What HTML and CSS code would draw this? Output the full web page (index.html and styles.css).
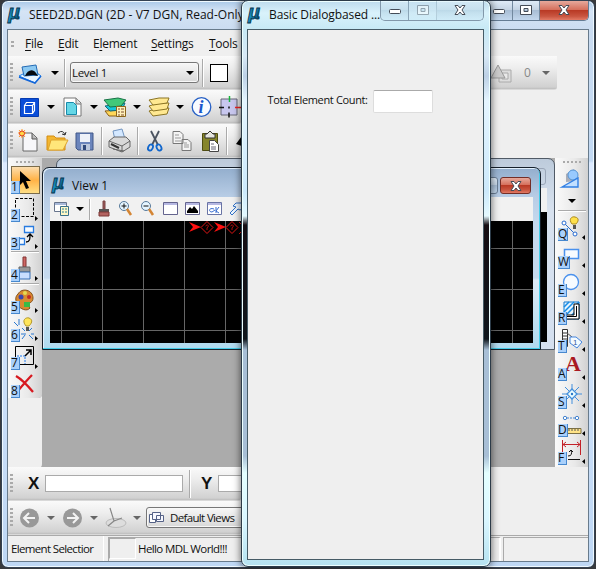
FILE: index.html
```html
<!DOCTYPE html>
<html lang="en">
<head>
<meta charset="utf-8">
<title>SEED2D.DGN</title>
<link rel="stylesheet" href="styles.css">
</head>
<body>
<div class="desktop">
<section class="window main">
  <header class="titlebar">
    <svg class="logo" width="16" height="18"><defs><linearGradient id="mu" x1="0" y1="0" x2="1" y2="1"><stop offset="0" stop-color="#06304a"/><stop offset=".5" stop-color="#168fc0"/><stop offset="1" stop-color="#04263c"/></linearGradient></defs><text class="mu" x="0" y="12" fill="url(#mu)">µ</text></svg>
    <span class="title">SEED2D.DGN (2D - V7 DGN, Read-Only</span>
    <div class="controls">
      <i class="ctl"><svg width="14" height="12"><rect x="1.500" y="5.500" width="11" height="4" rx="1"/></svg></i>
      <i class="ctl"><svg width="14" height="12"><path fill-rule="evenodd" d="M1.500 1.500h11v9h-11zM5 4.500h4v3H5z"/></svg></i>
      <i class="ctl close"><svg width="14" height="12"><path d="M2 1.500h3l2 2.500 2-2.500h3L9 6l3 4.500H9L7 8l-2 2.500H2L5 6z"/></svg></i>
    </div>
  </header>
  <div class="client">
    <nav class="menu"><i class="grip short"></i><span class="m1"><u>F</u>ile</span><span class="m2"><u>E</u>dit</span><span class="m3">E<u>l</u>ement</span><span class="m4"><u>S</u>ettings</span><span class="m5"><u>T</u>ools</span></nav>
    <div class="bar attributes">
      <i class="grip"></i>
      <svg class="ic" viewBox="0 0 27 28"><path d="M3 17l16 7 6-7-4-3H9z" fill="#e9f5ff" stroke="#1680ee"/><path d="M3 18l16 6 6-7" fill="none" stroke="#1466d8" stroke-width="1.500"/><path d="M6 8l14-2 2 10-14 1z" fill="#8cc9f2" stroke="#246bb5"/><path d="M9 17c2-6 8-8 11-3l2 3-5-1z" fill="#05090f"/></svg>
      <i class="drop wide"></i><i class="sep"></i>
      <div class="combo level"><span>Level 1</span><i class="drop"></i></div>
      <i class="sep"></i><i class="swatch"></i><i class="fill"></i>
      <svg class="ic" viewBox="0 0 27 28"><path d="M12 11h12v12H12z" fill="#ddd" stroke="#aaa"/><path d="M15 14h6v6h-6z" fill="#e9e9e9" stroke="#aaa"/><path d="M4 19L11 6l7 13z" fill="#ccc" stroke="#999"/></svg>
      <span class="zero">0</span><i class="drop dim"></i>
    </div>
    <div class="bar primary">
      <i class="grip"></i>
      <svg class="ic" viewBox="0 0 27 28"><path d="M4.500 5.500h18v18h-18z" fill="#0b4ed8" stroke="#063bb0"/><path d="M8.500 12.500h8v8h-8zm0 0l2-3h8v8l-2 3m0-8l2-3" fill="none" stroke="#fff" stroke-width="1.200"/></svg><i class="drop"></i>
      <svg class="ic" viewBox="0 0 27 28"><path d="M5 5h12l5 5v13H5z" fill="#fff" stroke="#777"/><path d="M17 5v6h5" fill="#ddd" stroke="#777"/><path d="M7.500 9.500h7l3 3v9h-10z" fill="#65d7e6" stroke="#188aab"/></svg><i class="drop"></i>
      <svg class="ic" viewBox="0 0 27 28"><path d="M3 18l4 5h9l3-6z" fill="#ffd75a" stroke="#875c16"/><path d="M3 13l5 5 12-1 3-7z" fill="#16c6d8" stroke="#146677"/><path d="M2 7l14-2 8 2-5 6-11 1z" fill="#42c879" stroke="#187346"/><path d="M14.500 13.500h9v10h-9z" fill="#fff0ba" stroke="#8b651a"/><path d="M16 16h2m1 0h3m-6 3h2m1 0h3m-6 3h2m1 0h3" stroke="#7c4d2a"/></svg><i class="drop"></i>
      <svg class="ic" viewBox="0 0 27 28"><g fill="#ffe891" stroke="#8b7424"><path d="M4 18l4 5 14-2 2-6H14z"/><path d="M4 13l4 5 14-2 2-6H14z"/><path d="M4 7l4 5 14-2 2-5H14z"/></g></svg><i class="drop"></i>
      <svg class="ic" viewBox="0 0 27 28"><circle cx="13.500" cy="14" r="9.300" fill="#f8fbff" stroke="#2861c5" stroke-width="1.300"/><text x="10.500" y="20" class="info">i</text></svg>
      <svg class="ic" viewBox="0 0 27 28"><path d="M6 6h16v16H6z" fill="#c8c7ee" stroke="#667"/><path d="M14.500 3v6" stroke="#18b53c" stroke-width="1.500"/><path d="M4 14.500h5m5-1v2m0 4v5" stroke="#111" stroke-width="1.500"/><path d="M20 14.500h7" stroke="#e22" stroke-width="1.500"/></svg>
    </div>
    <div class="bar standard">
      <i class="grip"></i>
      <svg class="ic" viewBox="0 0 27 28"><path d="M7 6h9l5 5v13H7z" fill="#f7f7fa" stroke="#666"/><path d="M16 6v6h5" fill="#bbb" stroke="#555"/><path d="M6 2v9M2 6h8M3 3l6 7M9 3l-6 7" stroke="#ff9b28"/><circle cx="6" cy="6.500" r="2.500" fill="#ffda48" stroke="#e13820"/></svg>
      <svg class="ic" viewBox="0 0 27 28"><path d="M4 9h7l2 2h9v12H4z" fill="#f3b631" stroke="#d48c11"/><path d="M8 13h17l-5 10H5z" fill="#ffe67a" stroke="#dea32c"/><path d="M15 6q5-4 7 2m0 0l-3-1m3 1l1-3" fill="none" stroke="#333"/></svg>
      <svg class="ic" viewBox="0 0 27 28"><path d="M6 6h17v17H8l-2-2z" fill="#6b85bc" stroke="#405787"/><path d="M10 7h10v8H10z" fill="#eef1f8"/><path d="M11 17h9v6h-9z" fill="#bcc8dd"/><path d="M13 18h3v5h-3z" fill="#31497b"/></svg>
      <i class="sep printsep"></i>
      <svg class="ic" viewBox="0 0 27 28"><path d="M7 4l9-2 3 10-10 1z" fill="#d4e8ff" stroke="#7295c0"/><path d="M3 14l5-4h12l4 4v6l-8 5-13-5z" fill="#d9d9d9" stroke="#666"/><path d="M3 14l13 5 8-5M16 19v6m-9-3l11 2" fill="none" stroke="#666"/><path d="M5 17l8 4" stroke="#333" stroke-width="2"/></svg>
      <i class="sep printsep"></i>
      <svg class="ic" viewBox="0 0 27 28"><path d="M9 4l7 14M17 4l-7 14" stroke="#4a5360" stroke-width="1.800"/><ellipse cx="8.500" cy="20.500" rx="2.300" ry="3.200" transform="rotate(25 8.500 20.500)" fill="none" stroke="#1267cc" stroke-width="1.800"/><ellipse cx="17" cy="20.500" rx="2.300" ry="3.200" transform="rotate(-25 17 20.500)" fill="none" stroke="#1267cc" stroke-width="1.800"/></svg>
      <svg class="ic" viewBox="0 0 27 28"><path d="M4 4.500h7l3 3v9H4zm9 8h6l3 3v8h-9z" fill="#f4f4f4" stroke="#777"/><path d="M6 8h4m-4 3h6m-6 3h6m3 2h3m-3 2h5m-5 2h5" stroke="#999"/></svg>
      <svg class="ic" viewBox="0 0 27 28"><path d="M6.500 6.500h15v17h-15z" fill="#86852b" stroke="#4f4d12"/><path d="M9 7h2l3-3 3 3h2v4H9z" fill="#e6e6df" stroke="#333"/><path d="M13.500 13.500h5l4 4v7h-9z" fill="#fff" stroke="#444"/><path d="M15 17h3m-3 3h5m-5 2h5" stroke="#667"/></svg>
      <i class="sep tail"></i>
      <svg class="ic" viewBox="0 0 27 28"><path d="M8 17l6-8v10z"/></svg>
    </div>
    <div class="workspace">
      <aside class="rail left">
        <i class="grip horizontal"></i>
        <div class="tool active"><svg viewBox="0 0 28 28"><path d="M9 5v14l3-3 3 7 3-1-3-7h5z"/></svg><b>1</b></div>
        <div class="tool"><svg viewBox="0 0 28 28"><path d="M4.500 4.500h18v18h-18z" fill="none" stroke="#000" stroke-dasharray="3 1.500"/><path d="M24 22v5l3-2.500z"/></svg><b>2</b></div>
        <div class="tool"><svg viewBox="0 0 28 28"><path d="M13.500 4.500h9v6h-9zM5.500 16.500h8v6h-8z" fill="#f7fbff" stroke="#287be0" stroke-width="1.300"/><path d="M15 20c4 0 4-3 4-8m-3 3l3-3 3 3" fill="none" stroke="#000" stroke-width="1.300"/><path d="M24 22v5l3-2.500z"/></svg><b>3</b></div>
        <i class="rule"></i>
        <div class="tool"><svg viewBox="0 0 28 28"><path d="M12 3h3v10h-3z" fill="#ce6663" stroke="#813332"/><path d="M8 13h11v5H8z" fill="#999" stroke="#666"/><path d="M8 18h11v7H8z" fill="#c9deff" stroke="#366fb4"/><path d="M24 22v5l3-2.500z"/></svg><b>4</b></div>
        <i class="rule"></i>
        <div class="tool"><svg viewBox="0 0 28 28"><path d="M7 8c4-7 15-4 15 4 0 5-4 4-5 7l2 3c-3 4-10 1-12-3-3-5-3-8 0-11z" fill="#d88a31" stroke="#85511c"/><circle cx="10" cy="11" r="2.500" fill="#3d45ad"/><circle cx="14" cy="7" r="2" fill="#e5da52"/><circle cx="18" cy="11" r="2" fill="#c52b24"/><path d="M13 16h6v5h-6z" fill="#38bc48"/><path d="M24 22v5l3-2.500z"/></svg><b>5</b></div>
        <div class="tool"><svg viewBox="0 0 28 28"><path d="M3 8l4 4m1-7v6M10 20h5m5 0h3M11 14l3 3m7-3l-3 3m-4 4l-3 4m7-4l4 4" fill="none" stroke="#2b78d0"/><path d="M15 12c-5-6 0-9 3-8 5 2 2 6 0 8z" fill="#ffe55a" stroke="#b49829"/><path d="M15 13h3v4h-3z" fill="#555"/><path d="M24 22v5l3-2.500z"/></svg><b>6</b></div>
        <div class="tool"><svg viewBox="0 0 28 28"><path d="M4.500 4.500h18v18h-18z" fill="none" stroke="#000"/><path d="M6 14h8v8" fill="none" stroke="#1f7bf0" stroke-dasharray="2 1"/><path d="M14 14l6-6m-5 0h5v5" fill="none" stroke="#000" stroke-width="1.500"/><path d="M24 22v5l3-2.500z"/></svg><b>7</b></div>
        <div class="tool"><svg viewBox="0 0 28 28"><path d="M5 6c7 4 12 10 17 16M21 5C16 10 11 16 6 22" fill="none" stroke="#d71920" stroke-width="2.300"/></svg><b>8</b></div>
      </aside>
      <div class="canvas">
        <div class="view back"><i class="backbutton"></i><div class="backbody"></div></div>
        <div class="view front">
          <header class="viewtitle"><svg class="logo" width="18" height="18"><text class="mu" x="1" y="12" fill="url(#mu)">µ</text></svg><span>View 1</span><i class="ctl"></i><i class="ctl close"><svg width="14" height="12"><path d="M2 1.500h3l2 2.500 2-2.500h3L9 6l3 4.500H9L7 8l-2 2.500H2L5 6z"/></svg></i></header>
          <div class="viewtools">
            <svg class="va" viewBox="0 0 22 22"><path d="M4.500 4.500h12v9h-12z" fill="#fff" stroke="#68758d"/><path d="M5 5h11v2H5z" fill="#a8b9d9"/><path d="M10.500 8.500h8v9h-8z" fill="#fff7c5" stroke="#38708a"/><path d="M12 11h2m1 0h2m-5 3h2m1 0h2" stroke="#27819a"/></svg><i class="drop"></i><i class="sep"></i>
            <svg viewBox="0 0 22 22"><path d="M10 3h2v8h-2z" fill="#9e5959" stroke="#794444"/><path d="M6 11h10v3H6z" fill="#555"/><path d="M6 14h10v4H6z" fill="#b26360" stroke="#7c3837"/></svg>
            <svg viewBox="0 0 22 22"><circle cx="9" cy="8" r="4.500" fill="#e5f5ff" stroke="#56799a"/><path d="M12 11l4 6" stroke="#d48534" stroke-width="2.500"/><path d="M6.500 8h5M9 5.500v5" stroke="#111"/></svg>
            <svg viewBox="0 0 22 22"><circle cx="9" cy="8" r="4.500" fill="#e5f5ff" stroke="#56799a"/><path d="M12 11l4 6" stroke="#d48534" stroke-width="2.500"/><path d="M6.500 8h5" stroke="#111"/></svg>
            <svg viewBox="0 0 22 22"><path d="M4.500 4.500h14v12h-14z" fill="#fff" stroke="#64648e"/><path d="M5 5h13v2H5z" fill="#b6b8e2"/></svg>
            <svg viewBox="0 0 22 22"><path d="M4.500 4.500h14v12h-14z" fill="#fff" stroke="#64648e"/><path d="M5 5h13v2H5z" fill="#b6b8e2"/><path d="M6 15v-2l3-4 2 2 2-3 4 5v2z"/></svg>
            <svg viewBox="0 0 22 22"><path d="M4.500 4.500h14v12h-14z" fill="#fff" stroke="#6974a5"/><path d="M5 5h13v2H5z" fill="#b6b8e2"/><path d="M11 11c-5-2-6 3-2 3l3-2m1-3v6m0-2l3-4m-3 4l3 2" stroke="#376cd0" fill="none"/></svg>
            <svg viewBox="0 0 22 22"><path d="M5 15l6-6-3-1 3-3h6v6l-2 1-2-1-6 6z" fill="#edf6ff" stroke="#3271c6"/></svg>
          </div>
          <svg class="drawing" viewBox="0 0 483 122"><path d="M11.500 0v122m41-122v122m41-122v122m41-122v122m41-122v122m41-122v122m41-122v122m41-122v122m41-122v122m41-122v122m41-122v122m41-122v122M0 27.500h483M0 68.500h483M0 109.500h483" stroke="#666" fill="none"/><path d="M139 1l12 5-12 5 4-5zM164 1l12 5-12 5 4-5z" fill="#f11"/><path d="M151 6.500l6-6 6 6-6 6zM176 6.500l6-6 6 6-6 6zM189 1l6 6-6 6" stroke="#e31616" fill="none"/><path d="M155.500 5q2-2.500 3 0l-1.500 2v2m23.500-4q2-2.500 3 0l-1.500 2v2" stroke="#d11" stroke-width=".8" fill="none"/></svg>
        </div>
      </div>
      <aside class="rail right">
        <i class="grip horizontal"></i>
        <svg class="place" viewBox="0 0 28 26"><path d="M8 8l8-5 4 12-12 1z" fill="#a9adb8"/><circle cx="15" cy="9" r="5" fill="#98caff" stroke="#5795d4"/><path d="M4 21l16-9v9z" fill="#c3e0ff" stroke="#3280e5" stroke-width="1.400"/></svg>
        <i class="drop"></i><i class="rule"></i>
        <div class="tool"><svg viewBox="0 0 28 28"><path d="M6 10l10 10" stroke="#286bd0"/><circle cx="6" cy="10" r="2" fill="#fff" stroke="#286bd0"/><circle cx="17" cy="21" r="2" fill="#fff" stroke="#286bd0"/><path d="M14 11c-4-5 0-8 3-7 5 1 3 5 1 7z" fill="#ffe14b" stroke="#aa8920"/><path d="M15 12h3v4h-3z" fill="#555"/><path d="M27 22v5l-3-2.500z"/></svg><b>Q</b></div>
        <div class="tool"><svg viewBox="0 0 28 28"><path d="M6.500 8.500h14v9h-14z" fill="#f7fbff" stroke="#4a91ed" stroke-width="1.500"/><path d="M27 22v5l-3-2.500z"/></svg><b>W</b></div>
        <div class="tool"><svg viewBox="0 0 28 28"><circle cx="13" cy="13" r="7.500" fill="#f7fbff" stroke="#4a91ed" stroke-width="1.300"/><path d="M27 22v5l-3-2.500z"/></svg><b>E</b></div>
        <div class="tool"><svg viewBox="0 0 28 28"><path d="M6 5h15v17H6z" fill="#e4f4ff" stroke="#1379cd"/><path d="M6 10l5-5m-5 10L16 5M6 20L21 5M10 22l11-11" stroke="#168ce6" stroke-width="1.500"/><path d="M16 7h5v15H8v-4h8z" fill="#fff" stroke="#000"/><path d="M18.500 9v10.500H9" fill="none" stroke="#000"/><path d="M27 22v5l-3-2.500z"/></svg><b>R</b></div>
        <div class="tool"><svg viewBox="0 0 28 28"><path d="M4.500 4.500h5v17h-5zM5 8h5m-5 3h5m-5 3h5m-5 3h5" fill="#fff" stroke="#333"/><path d="M9 8l5 4" stroke="#555"/><path d="M12 12h6l6 5-5 6-7-5z" fill="#f4fbff" stroke="#4485df"/><text x="15" y="20" class="tag">1</text><path d="M27 22v5l-3-2.500z"/></svg><b>T</b></div>
        <div class="tool"><svg viewBox="0 0 28 28"><text x="7" y="18" class="red-a">A</text><path d="M27 22v5l-3-2.500z"/></svg><b>A</b></div>
        <div class="tool"><svg viewBox="0 0 28 28"><path d="M4 13h20M14 3v20M7 6l14 14M21 6L7 20" stroke="#438fdc"/><path d="M14 8l5 5-5 5-5-5z" fill="#e8fbff" stroke="#438fdc" stroke-width="1.300"/><circle cx="14" cy="13" r="1.200" fill="#2b78c8"/><path d="M27 22v5l-3-2.500z"/></svg><b>S</b></div>
        <div class="tool"><svg viewBox="0 0 28 28"><circle cx="7" cy="9" r="1.700" fill="#fff" stroke="#4383d0"/><circle cx="19" cy="9" r="1.700" fill="#fff" stroke="#4383d0"/><path d="M9 9h8" stroke="#4383d0" stroke-dasharray="2 1"/><path d="M8 19.500h15v5H8z" fill="#ffe387" stroke="#7c7044"/><path d="M11 20v2m3-2v2m3-2v2m3-2v2" stroke="#555"/><path d="M27 22v5l-3-2.500z"/></svg><b>D</b></div>
        <div class="tool"><svg viewBox="0 0 28 28"><path d="M4.500 3v13m18-13v15M5 7.500h17M8 5L5 7.500 8 10m11-5l3 2.500-3 2.500" fill="none" stroke="#c32128"/><path d="M10 19q5 0 3-6m-2 2l2-2 2 2M10 22.500h12" fill="none" stroke="#111"/><path d="M27 22v5l-3-2.500z"/></svg><b>F</b></div>
      </aside>
    </div>
    <div class="bar coords"><i class="grip"></i><strong>X</strong><i class="field"></i><i class="sep"></i><strong class="y">Y</strong><i class="field"></i></div>
    <div class="bar history">
      <i class="grip"></i>
      <svg class="ic" viewBox="0 0 27 28"><circle cx="13.500" cy="14" r="9.500" fill="#999"/><path d="M19 14H8m5-5l-5 5 5 5" fill="none" stroke="#f3f3f3" stroke-width="2"/></svg><i class="drop dim"></i>
      <svg class="ic" viewBox="0 0 27 28"><circle cx="13.500" cy="14" r="9.500" fill="#999"/><path d="M8 14h11m-5-5l5 5-5 5" fill="none" stroke="#f3f3f3" stroke-width="2"/></svg><i class="drop dim"></i>
      <svg class="ic" viewBox="0 0 27 28"><ellipse cx="14" cy="19" rx="10" ry="4.500" fill="#ddd" stroke="#bbb"/><path d="M8 4l4 13 8-3m-8 3l-6 5" fill="none" stroke="#888" stroke-width="1.200"/></svg><i class="drop dim"></i>
      <div class="combo views"><svg width="17" height="14"><path d="M1.500 3.500h6v8h-6z" fill="#fff" stroke="#556287"/><path d="M4.500 1.500h8v7h-8zm4 3h7v6h-7z" fill="#f7f8ff" stroke="#556287"/></svg><span>Default Views</span></div>
    </div>
    <footer class="status"><div class="s1">Element Selectior</div><div class="s2"><i></i><span>Hello MDL World!!!</span></div><div class="s3"></div></footer>
  </div>
</section>
<section class="window dialog">
  <header class="titlebar">
    <svg class="logo" width="16" height="18"><text class="mu" x="0" y="12" fill="url(#mu)">µ</text></svg>
    <span class="title">Basic Dialogbased ...</span>
    <div class="controls">
      <i class="ctl"><svg width="14" height="12"><rect x="1.500" y="5.500" width="11" height="4" rx="1"/></svg></i>
      <i class="ctl disabled"><svg width="14" height="12"><path fill-rule="evenodd" d="M1.500 1.500h11v9h-11zM5 4.500h4v3H5z"/></svg></i>
      <i class="ctl xwide"><svg width="14" height="12"><path d="M2 1.500h3l2 2.500 2-2.500h3L9 6l3 4.500H9L7 8l-2 2.500H2L5 6z"/></svg></i>
    </div>
  </header>
  <div class="form"><label>Total Element Count:</label><input type="text"></div>
</section>
</div>
</body>
</html>
```
FILE: styles.css
```css
* { box-sizing: border-box; }
body { margin: 0; overflow: hidden; font: 12px "Open Sans", "Noto Sans", sans-serif; color: #111; }
i, b { font-style: normal; }
svg { display: block; flex: none; overflow: visible; }
.desktop { position: relative; width: 596px; height: 569px; background: #383a3d; overflow: hidden; }
.window { position: absolute; display: flex; flex-direction: column; border-radius: 7px; border: 1px solid #344253; }
.main { left: 1px; top: 0; width: 594px; height: 568px; padding: 0 5px 5px; background: linear-gradient(#a9c8e8 0, #d5e4f5 10px, #cadcf1 30px, #c2d9f3 160px, #dceaff 162px, #bed7f4); box-shadow: inset 0 0 0 1px #eff9ff; }
.titlebar { height: 28px; flex: none; display: flex; padding-left: 1px; }
.logo { margin-top: 6px; }
.mu { font: italic bold 21px "Liberation Sans"; stroke: #063750; stroke-width: .9px; }
.title { margin: 5px 0 0 5px; white-space: nowrap; letter-spacing: .03px; line-height: 18px; }
.main .title { width: 214px; }
.controls { display: flex; height: 20px; margin-left: auto; border: 1px solid #657c94; border-top: 0; border-radius: 0 0 5px 5px; overflow: hidden; }
.main .controls { width: 104px; }
.ctl { display: flex; width: 27px; align-items: center; justify-content: center; background: linear-gradient(#dfebf7, #c3d2e2 48%, #a8bdd4 50%, #c3d7ed); border-right: 1px solid #72889e; }
.titlebar .ctl { padding-bottom: 1px; }
.ctl svg { fill: #fff; stroke: #454c57; stroke-width: 1; }
.ctl.close { flex: 1; border: 0; background: linear-gradient(#e6a99c, #d56d59 48%, #b93a25 50%, #c95540 80%, #e27a65); }
.client { flex: 1; display: flex; flex-direction: column; border: 1px solid #687b8c; background: #efefef; overflow: hidden; }
.menu { height: 26px; flex: none; display: flex; align-items: center; padding: 1px 0 0 3px; letter-spacing: -.25px; white-space: nowrap; }
.menu u { text-underline-offset: 2px; text-decoration-thickness: 1px; }
.m1 { width: 33px; margin-left: 11px; } .m2 { width: 35px; } .m3 { width: 58px; } .m4 { width: 58px; }
.grip { display: block; width: 3px; height: 19px; flex: none; background: repeating-linear-gradient(#aaa 0 2px, transparent 2px 4px); margin: 0 3px 0 2px; }
.grip.short { height: 6px; margin: 0; }
.grip.horizontal { width: 19px; height: 2px; background: repeating-linear-gradient(90deg, #aaa 0 2px, transparent 2px 4px); }
.bar { height: 34px; flex: none; display: flex; align-items: center; width: 233px; background: linear-gradient(#fafafa, #eee 35%, #d1d1d1 94%, #bdbdbd); border-bottom: 1px solid #d9d9d9; border-radius: 0 0 3px; overflow: hidden; }
.attributes { width: 549px; }
.ic { width: 27px; height: 28px; }
.drop { width: 16px; flex: none; display: flex; justify-content: center; }
.drop::after { content: ""; border: 4px solid transparent; border-top-color: #000; border-bottom: 0; }
.drop.dim::after { border-top-color: #666; }
.wide { width: 21px; padding-left: 3px; }
.sep { width: 2px; height: 28px; background: #aaa; border-right: 1px solid #fff; flex: none; }
.combo { height: 21px; display: flex; align-items: center; border: 1px solid #777; border-radius: 3px; background: linear-gradient(#f7f7f7, #e8e8e8 50%, #d8d8d8); box-shadow: inset 0 0 0 1px #f8f8f8; }
.level { width: 129px; margin: 0 3px 0 4px; justify-content: space-between; padding-left: 1px; font-size: 11.5px; letter-spacing: -.3px; }
.swatch { width: 18px; height: 18px; border: 1px solid #000; background: #fff; margin-left: 6px; }
.fill { flex: 1; }
.zero { color: #888; width: 24px; padding-left: 10px; }
.attributes .drop.dim { margin-right: 3px; }
.info { font: italic bold 18px "Liberation Serif"; fill: #1856cb; }
.printsep { margin: 0 3px 0 4px; }
.tail { margin: 0 0 0 3px; }
.workspace { height: 309px; flex: none; display: flex; background: #ababab; }
.rail { width: 34px; flex: none; background: linear-gradient(90deg, #fafafa, #e9e9e9 60%, #d1d1d1); padding-top: 3px; }
.left { height: 240px; border-radius: 0 0 4px; box-shadow: 0 70px #efefef; padding-left: 3px; }
.rail .grip { margin: 0 0 3px 5px; }
.tool { position: relative; height: 28px; width: 29px; }
.tool svg { width: 28px; height: 28px; }
.tool b { position: absolute; left: 0; bottom: 0; min-width: 9px; height: 13px; font-size: 12px; line-height: 12px; font-weight: 400; background: #a9d0fb; border-right: 1px solid #4788ce; border-bottom: 1px solid #4788ce; }
.active { background: linear-gradient(#fce1b6, #ffb246 50%, #ffe289); box-shadow: inset 0 0 0 1px #7b6c4b; }
.rule { display: block; height: 2px; margin: 1px 0; width: 28px; background: #aaa; border-bottom: 1px solid #fff; }
.canvas { position: relative; flex: 1; overflow: hidden; }
.right { width: 33px; padding-left: 3px; height: 309px; }
.place { width: 28px; height: 26px; }
.right > .drop { width: 28px; height: 17px; padding-top: 7px; align-items: flex-start; }
.tag { font: 8px "Liberation Sans"; fill: #345ca0; }
.red-a { font: bold 22px "Liberation Serif"; fill: #a91922; }
.view { position: absolute; border: 1px solid #25313e; border-radius: 7px 7px 0 0; }
.back { left: 14px; top: 0; width: 499px; height: 192px; background: linear-gradient(#bdcbdb, #d8e2ef 50px, #d5e0ef); border-color: #505a66; }
.backbutton { position: absolute; right: 8px; top: 9px; width: 30px; height: 17px; border: 1px solid #9aa6b8; border-radius: 3px; }
.backbody { position: absolute; inset: 29px 7px 7px; border-top: 24px solid #f1f1f1; background: #000; }
.front { left: 0; top: 9px; width: 499px; height: 183px; padding: 0 7px 6px 7px; border-color: #16202b; background: linear-gradient(#93aecd, #b7cce5 28px, #c5d9ee 55px, #c5d9ee 110px, #dceaf6 112px, #afdaef); box-shadow: inset -1px -1px #43cce8, inset 1px 1px #e2f0fd; }
.viewtitle { height: 29px; display: flex; padding: 0 1px 0 1px; }
.viewtitle .logo { margin-top: 9px; }
.viewtitle span { margin: 9px auto 0 3px; line-height: 17px; }
.viewtitle .ctl { width: 28px; height: 17px; margin: 9px 1px 0; border: 1px solid #6b7e95; border-radius: 3px; }
.viewtitle .ctl.close { flex: none; width: 31px; border-color: #742e27; }
.viewtools { height: 24px; display: flex; align-items: center; background: #f1f1f1; }
.viewtools svg { width: 22px; height: 22px; }
.viewtools .drop { width: 16px; }
.viewtools .sep { height: 21px; margin: 0 2px 0 1px; }
.drawing { width: 483px; height: 122px; background: #000; overflow: hidden; }
.coords strong { flex: none; font: bold 17px "Liberation Sans"; width: 16px; margin-left: 12px; margin-right: 1px; }
.field { width: 138px; height: 17px; flex: none; border: 1px solid #aaa; background: #fff; margin: 0 6px 0 0; }
.coords .y { width: 17px; margin-left: 10px; margin-right: 0; }
.views { width: 100px; flex: none; padding-left: 1px; font-size: 11.5px; letter-spacing: -.65px; white-space: nowrap; margin-left: 1px; }
.views span { margin-left: 5px; }
.status { height: 27px; flex: none; display: flex; border-top: 1px solid #aaa; font-size: 11.5px; letter-spacing: -.6px; white-space: nowrap; line-height: 25px; }
.s1 { width: 96px; padding-left: 3px; border-right: 1px solid #fff; letter-spacing: -.65px; }
.s2 { flex: 1; display: flex; margin: 1px 0 0 4px; border-left: 1px solid #aaa; border-top: 1px solid #aaa; border-right: 2px solid #fff; line-height: 21px; }
.s2 i { width: 27px; height: 21px; border: 1px solid #aaa; border-right-color: #fff; border-bottom-color: #fff; }
.s2 span { margin-left: 2px; }
.s3 { width: 85px; margin: 1px 0 0 2px; border-left: 1px solid #aaa; border-top: 1px solid #aaa; }
.dialog { left: 241px; top: 0; width: 250px; height: 567px; padding: 0 6px 6px 5px; border-color: #2c3b48; background: linear-gradient(#bddbed 0, #d9f2fb 12px, #c7e9f5 28px, #d8e9f6 55px, #bdd1e6 75px, #e5f5ff 100px, #cce9fb 190px, #e4f9ff 215px, #160e13 224px, #10161c 338px, #a8bfd6 349px, #a8bfd6 455px, #e4ffff 472px, #d9f6ff 520px, #b5e2f0); box-shadow: inset 0 0 0 1px #edffff, 0 0 7px 1px rgba(0,0,0,.5); }
.dialog .title { letter-spacing: -.12px; width: 112px; }
.dialog .controls { width: 104px; flex: none; border-color: #8298aa; }
.dialog .ctl { width: 28px; background: linear-gradient(#e4f4fc88, #bfd9e7aa 49%, #a9c9dc88 50%, #ceeaf888); border-color: #8ba5b7; }
.dialog .disabled { opacity: .45; }
.dialog .xwide { flex: 1; border: 0; }
.form { flex: 1; display: flex; align-items: flex-start; border: 1px solid #465b66; background: #efefef; padding: 60px 0 0 19.5px; }
.form label { width: 101.5px; font-size: 11px; letter-spacing: -.35px; line-height: 20px; white-space: nowrap; }
.form input { width: 60px; height: 23px; margin-left: 4px; border: 1px solid #ddd; border-top-color: #aaa; border-radius: 2px; background: #fff; padding: 0; }
```
